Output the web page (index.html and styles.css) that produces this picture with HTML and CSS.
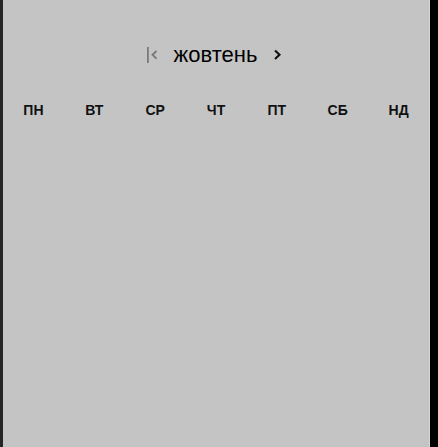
FILE: index.html
```html
<!DOCTYPE html>
<html lang="uk">
<head>
<meta charset="utf-8">
<link rel="stylesheet" href="styles.css">
</head>
<body>
<div class="frame">
  <div class="edge-left"></div>
  <div class="calendar">
    <div class="header">
      <button class="nav nav-first" aria-label="first">
        <svg width="11" height="18" viewBox="0 0 11 18"><rect x="0" y="1" width="1.8" height="16" fill="#7a7a7a"/><path d="M9.5 5 L5.5 8.8 L9.5 12.6" fill="none" stroke="#7a7a7a" stroke-width="1.9"/></svg>
      </button>
      <span class="month">жовтень</span>
      <button class="nav nav-next" aria-label="next">
        <svg width="9" height="18" viewBox="0 0 9 18"><path d="M2 4.5 L6.5 8.8 L2 13.1" fill="none" stroke="#111" stroke-width="2.1"/></svg>
      </button>
    </div>
    <div class="weekdays">
      <span>ПН</span><span>ВТ</span><span>СР</span><span>ЧТ</span><span>ПТ</span><span>СБ</span><span>НД</span>
    </div>
  </div>
  <div class="edge-line"></div>
  <div class="edge-right"></div>
</div>
</body>
</html>
```
FILE: styles.css
```css
html, body {
  margin: 0;
  padding: 0;
  height: 100%;
}
body {
  background: #c4c4c4;
  font-family: "Liberation Sans", Arial, sans-serif;
}
.frame {
  display: flex;
  height: 447px;
}
.edge-left {
  width: 3px;
  background: #262626;
}
.edge-line {
  width: 1px;
  background: #d6d6d6;
}
.edge-right {
  width: 8px;
  background: #000;
}
.calendar {
  flex: 1;
  background: #c4c4c4;
}
.header {
  display: flex;
  justify-content: center;
  align-items: center;
  gap: 16px;
  padding-top: 43px;
  height: 24px;
  padding-right: 3px;
}
.nav {
  background: none;
  border: 0;
  padding: 0;
  display: flex;
  align-items: center;
}
.month {
  font-size: 22px;
  color: #000;
}
.weekdays {
  display: grid;
  grid-template-columns: repeat(7, 1fr);
  margin-top: 35px;
}
.weekdays span {
  text-align: center;
  font-weight: bold;
  font-size: 14px;
  color: #111;
}
```
